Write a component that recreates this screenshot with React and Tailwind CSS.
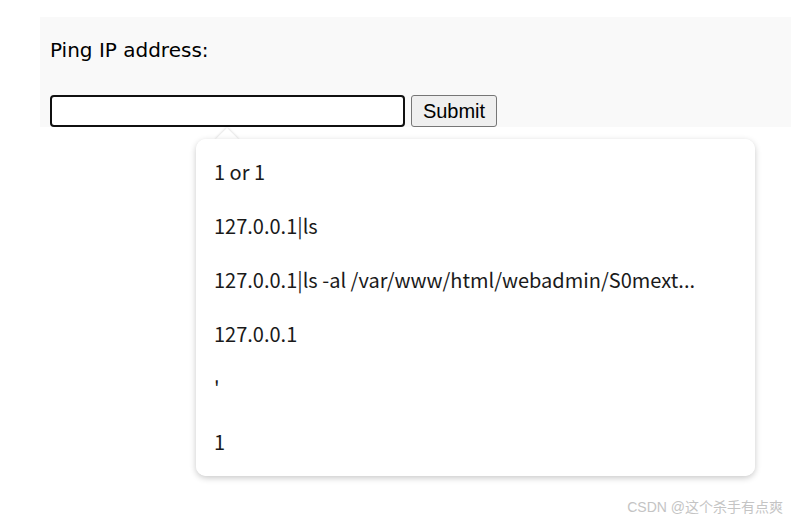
import React from "react";

const items = [
  "1 or 1",
  "127.0.0.1|ls",
  "127.0.0.1|ls -al /var/www/html/webadmin/S0mext...",
  "127.0.0.1",
  "'",
  "1",
];

export default function App() {
  return (
    <div className="relative w-[791px] h-[522px] bg-white overflow-hidden">
      <div className="ml-[40px] mt-[17px] bg-[#f9f9f9] px-[10px] pt-[21px]">
        <p className="h-[24px] text-[20px] leading-[24px] text-black [font-family:'DejaVu_Sans',sans-serif]">
          Ping IP address:
        </p>
        <div className="mt-[33px] flex items-center gap-[6px]">
          <div className="w-[355px] h-[32px] border-2 border-[#101010] rounded-[4px] bg-white" />
          <button className="w-[86px] h-[32px] border border-[#767676] rounded-[3px] bg-[#efefef] text-[20px] leading-[24px] text-black [font-family:'Liberation_Sans',Arial,sans-serif]">
            Submit
          </button>
        </div>
      </div>

      {/* autocomplete popup arrow */}
      <div className="absolute left-[219px] top-[131px] w-[16px] h-[16px] rotate-45 bg-white shadow-[0_0_3px_rgba(0,0,0,0.2)]" />
      {/* autocomplete popup */}
      <div className="absolute left-[196px] top-[139px] w-[559px] h-[337px] rounded-[10px] bg-white shadow-[0_2px_6px_rgba(0,0,0,0.22)]">
        <ul className="relative z-10 h-full bg-white rounded-[10px] pt-[6px]">
          {items.map((t, i) => (
            <li
              key={i}
              className="h-[54px] flex items-center pl-[18px] text-[20px] text-[#1a1a1a] [font-family:'Noto_Sans_CJK_SC','Noto_Sans',sans-serif]"
            >
              {t}
            </li>
          ))}
        </ul>
      </div>

      <div className="absolute right-[8px] bottom-[4px] text-[14px] text-[#c4c4c4] [font-family:'Liberation_Sans','Noto_Sans_CJK_SC',sans-serif]">
        CSDN @这个杀手有点爽
      </div>
    </div>
  );
}
